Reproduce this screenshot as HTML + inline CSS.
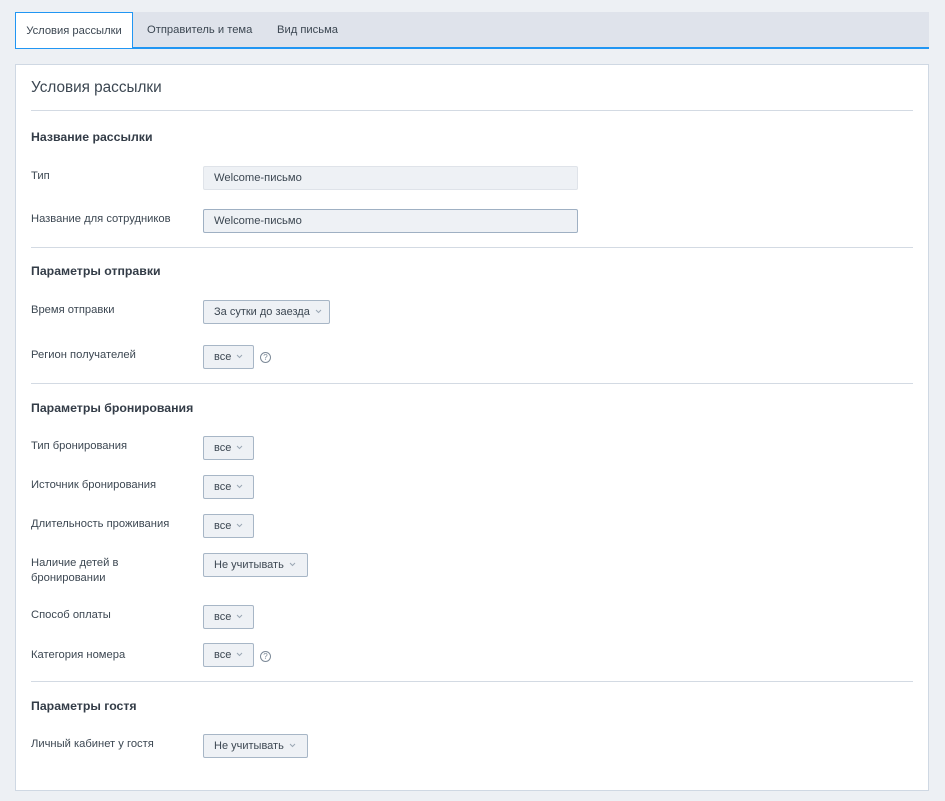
<!DOCTYPE html>
<html><head><meta charset="utf-8"><style>
*{margin:0;padding:0;box-sizing:border-box}
body{width:945px;height:801px;background:#edf0f4;font-family:"Liberation Sans",sans-serif;color:#3c4752;position:relative;overflow:hidden}
.a{position:absolute}
.tabs{left:15px;top:12px;width:914px;height:37px;background:#dfe3eb;border-bottom:2px solid #2196f3}
.tab{top:0;height:37px;line-height:36px;font-size:11.2px;color:#3c4752}
.act{left:0;width:118px;background:#fff;border:1px solid #2196f3;border-bottom:none;text-align:center;height:36px}
.panel{left:15px;top:64px;width:914px;height:727px;background:#fff;border:1px solid #cfd8e3}
.hr{left:31px;width:882px;height:1px;background:#d3dae3}
.h{left:31px;font-size:12.3px;font-weight:bold;color:#333c47}
.l{left:31px;font-size:11.2px;line-height:15px;color:#3c4752}
.in{left:203px;width:375px;height:24px;background:#eef1f5;border:1px solid #dfe3e9;border-radius:2px;font-size:11.2px;line-height:22px;padding-left:10px;color:#3c4752}
.in2{border-color:#9fb0c3}
.s{left:203px;height:24px;background:#eef1f5;border:1px solid #a7b6c6;border-radius:2px;font-size:11px;line-height:22px;padding-left:10px;color:#3c4752;white-space:nowrap}
.s svg{margin-left:5px;vertical-align:middle;position:relative;top:-1px}
.q{left:260px;width:11px;height:11px;border:1px solid #7d8a98;border-radius:50%;font-size:8px;line-height:9px;text-align:center;color:#7d8a98}
</style></head><body>
<div class="a tabs">
<div class="a tab act">Условия рассылки</div>
<div class="a tab" style="left:132px">Отправитель и тема</div>
<div class="a tab" style="left:262px">Вид письма</div>
</div>
<div class="a panel"></div>
<div class="a" style="left:31px;top:79px;font-size:15.3px;color:#3c4752">Условия рассылки</div>
<div class="a hr" style="top:110px"></div>
<div class="a h" style="top:130px">Название рассылки</div>
<div class="a l" style="top:169px">Тип</div>
<div class="a in" style="top:166px">Welcome-письмо</div>
<div class="a l" style="top:212px">Название для сотрудников</div>
<div class="a in in2" style="top:209px">Welcome-письмо</div>
<div class="a hr" style="top:247px"></div>
<div class="a h" style="top:264px">Параметры отправки</div>
<div class="a l" style="top:303px">Время отправки</div>
<div class="a s" style="top:300px;width:127px">За сутки до заезда<svg width="7" height="5"><path d="M1 1l2.5 2.5L6 1" fill="none" stroke="#9aa7b4"/></svg></div>
<div class="a l" style="top:348px">Регион получателей</div>
<div class="a s" style="top:345px;width:51px">все<svg width="7" height="5"><path d="M1 1l2.5 2.5L6 1" fill="none" stroke="#9aa7b4"/></svg></div>
<div class="a q" style="top:352px">?</div>
<div class="a hr" style="top:383px"></div>
<div class="a h" style="top:401px">Параметры бронирования</div>
<div class="a l" style="top:439px">Тип бронирования</div>
<div class="a s" style="top:436px;width:51px">все<svg width="7" height="5"><path d="M1 1l2.5 2.5L6 1" fill="none" stroke="#9aa7b4"/></svg></div>
<div class="a l" style="top:478px">Источник бронирования</div>
<div class="a s" style="top:475px;width:51px">все<svg width="7" height="5"><path d="M1 1l2.5 2.5L6 1" fill="none" stroke="#9aa7b4"/></svg></div>
<div class="a l" style="top:517px">Длительность проживания</div>
<div class="a s" style="top:514px;width:51px">все<svg width="7" height="5"><path d="M1 1l2.5 2.5L6 1" fill="none" stroke="#9aa7b4"/></svg></div>
<div class="a l" style="top:556px">Наличие детей в<br>бронировании</div>
<div class="a s" style="top:553px;width:105px">Не учитывать<svg width="7" height="5"><path d="M1 1l2.5 2.5L6 1" fill="none" stroke="#9aa7b4"/></svg></div>
<div class="a l" style="top:608px">Способ оплаты</div>
<div class="a s" style="top:605px;width:51px">все<svg width="7" height="5"><path d="M1 1l2.5 2.5L6 1" fill="none" stroke="#9aa7b4"/></svg></div>
<div class="a l" style="top:648px">Категория номера</div>
<div class="a s" style="top:643px;width:51px">все<svg width="7" height="5"><path d="M1 1l2.5 2.5L6 1" fill="none" stroke="#9aa7b4"/></svg></div>
<div class="a q" style="top:651px">?</div>
<div class="a hr" style="top:681px"></div>
<div class="a h" style="top:699px">Параметры гостя</div>
<div class="a l" style="top:737px">Личный кабинет у гостя</div>
<div class="a s" style="top:734px;width:105px">Не учитывать<svg width="7" height="5"><path d="M1 1l2.5 2.5L6 1" fill="none" stroke="#9aa7b4"/></svg></div>
</body></html>
